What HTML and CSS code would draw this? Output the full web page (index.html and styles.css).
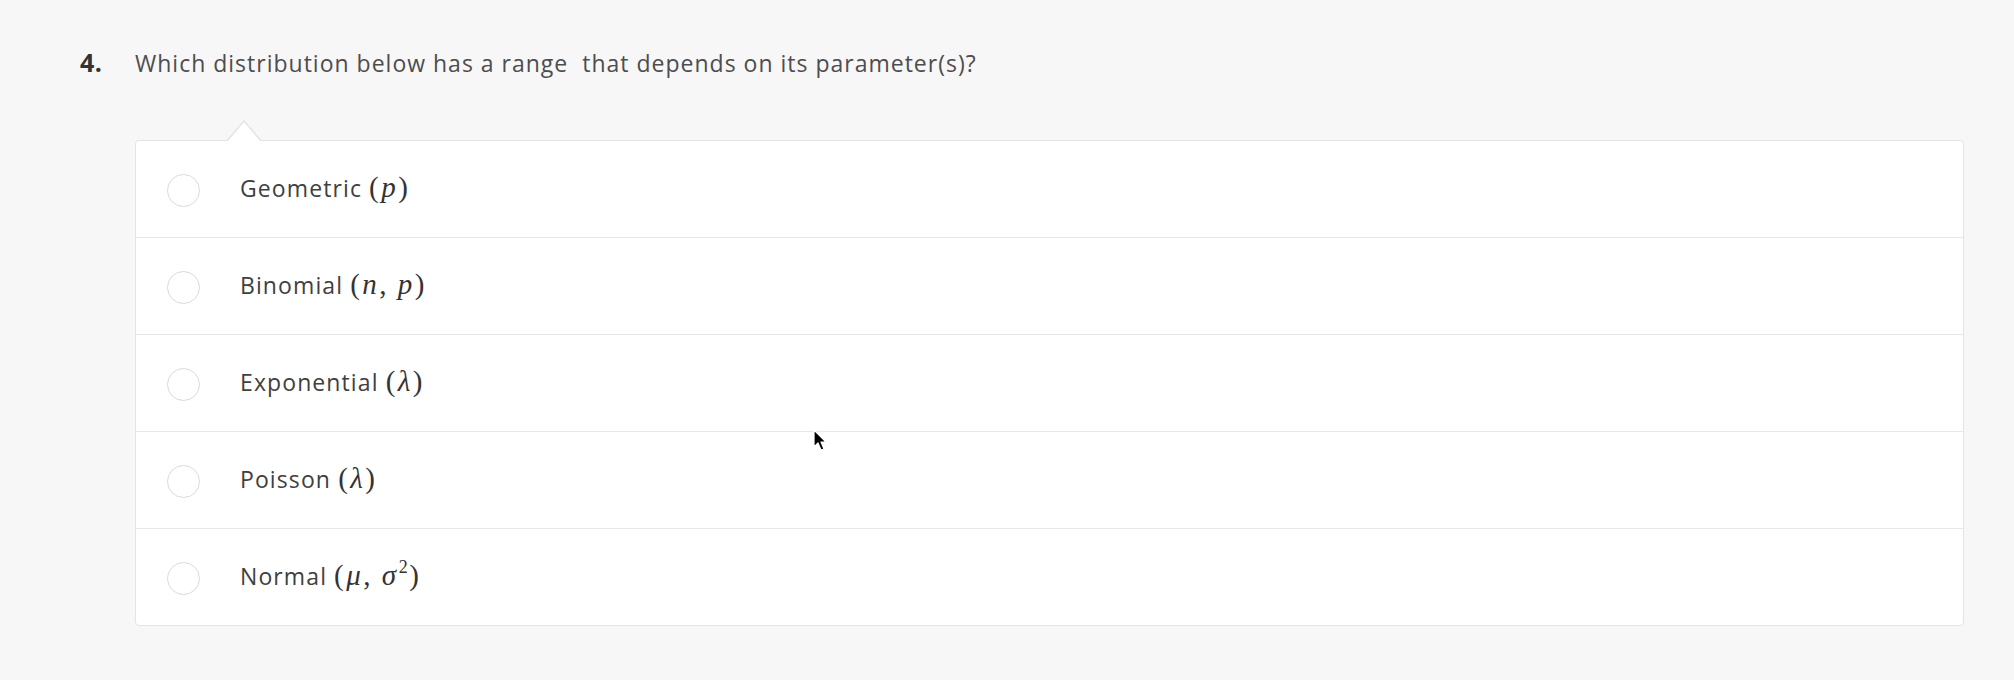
FILE: index.html
```html
<!DOCTYPE html>
<html lang="en">
<head>
<meta charset="utf-8">
<title>Question 4</title>
<link rel="stylesheet" href="styles.css">
</head>
<body>
<div class="question">
  <div class="q-head">
    <span class="q-num">4.</span>
    <span class="q-text">Which distribution below has a range&nbsp; that depends on its parameter(s)?</span>
  </div>
  <div class="card">
    <div class="row"><span class="radio"></span><span class="label">Geometric <span class="math">(<i>p</i>)</span></span></div>
    <div class="row"><span class="radio"></span><span class="label">Binomial <span class="math">(<i>n</i>, <i>p</i>)</span></span></div>
    <div class="row"><span class="radio"></span><span class="label">Exponential <span class="math">(<i>λ</i>)</span></span></div>
    <div class="row"><span class="radio"></span><span class="label">Poisson <span class="math">(<i>λ</i>)</span></span></div>
    <div class="row"><span class="radio"></span><span class="label">Normal <span class="math">(<i>μ</i>, <i>σ</i><sup>2</sup>)</span></span></div>
  </div>
</div>
<svg class="cursor" width="16" height="24" viewBox="0 0 16 24" aria-hidden="true">
  <path d="M1 1 L1 18 L5 14 L8 21 L11 20 L8 13 L13 13 Z" fill="#000" stroke="#fff" stroke-width="1.2" stroke-linejoin="round"/>
</svg>
</body>
</html>
```
FILE: styles.css
```css
html, body {
  margin: 0;
  padding: 0;
}
body {
  background: #f7f7f7;
  font-family: "Open Sans", "Noto Sans", sans-serif;
  color: #4a4a4a;
  height: 680px;
  position: relative;
}
.question {
  padding: 47px 50px 0 80px;
}
.q-head {
  display: flex;
  align-items: baseline;
  height: 93px;
}
.q-num {
  width: 55px;
  font-size: 25px;
  font-weight: 700;
  color: #333;
  line-height: 30px;
  letter-spacing: 0.5px;
}
.q-text {
  font-size: 23px;
  line-height: 30px;
  letter-spacing: 1px;
  color: #4d4d4d;
}
.card {
  position: relative;
  margin-left: 55px;
  background: #fff;
  border: 1px solid #e4e4e4;
  border-radius: 4px;
}
.card::before,
.card::after {
  content: "";
  position: absolute;
  width: 0;
  height: 0;
  border-style: solid;
}
.card::before {
  left: 90px;
  top: -21px;
  border-width: 0 18px 21px 18px;
  border-color: transparent transparent #e2e2e2 transparent;
}
.card::after {
  left: 91px;
  top: -19px;
  border-width: 0 17px 20px 17px;
  border-color: transparent transparent #fff transparent;
}
.row {
  display: flex;
  align-items: center;
  height: 96px;
  padding-left: 31px;
  border-top: 1px solid #e8e8e8;
}
.row:first-child {
  border-top: none;
}
.radio {
  width: 31px;
  height: 31px;
  border: 1.5px solid #dadada;
  border-radius: 50%;
  margin-right: 40px;
  flex: none;
  margin-top: 2px;
}
.label {
  font-size: 23px;
  letter-spacing: 1.1px;
  color: #404040;
  margin-top: -3px;
}
.math {
  font-family: "Liberation Serif", "DejaVu Serif", serif;
  font-size: 29px;
  letter-spacing: 1.5px;
  color: #333;
}
.math i {
  font-style: italic;
  padding: 0 1px;
}
.math sup {
  font-size: 18px;
  font-style: normal;
  vertical-align: 12px;
  line-height: 0;
}
.cursor {
  position: absolute;
  left: 813px;
  top: 429px;
}
```
